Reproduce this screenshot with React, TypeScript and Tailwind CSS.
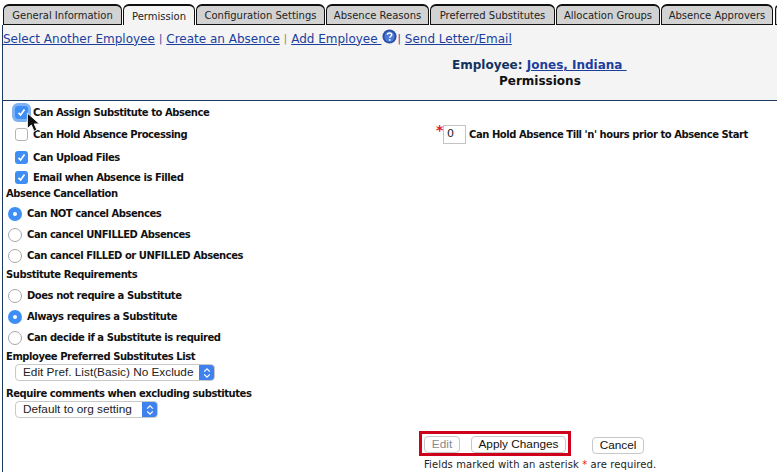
import React from 'react';

const tabs = [
  { label: 'General Information', w: 'w-[119px]' },
  { label: 'Permission', w: 'w-[72px]', active: true },
  { label: 'Configuration Settings', w: 'w-[129px]' },
  { label: 'Absence Reasons', w: 'w-[103px]' },
  { label: 'Preferred Substitutes', w: 'w-[125px]' },
  { label: 'Allocation Groups', w: 'w-[104px]' },
  { label: 'Absence Approvers', w: 'w-[112px]' },
];

const Check = ({ on, focus }: { on?: boolean; focus?: boolean }) => (
  <span
    className={`flex h-[13px] w-[13px] shrink-0 items-center justify-center rounded-[3px] ${
      on ? 'bg-[#3f8ef5]' : 'border border-[#b5b5b5] bg-white'
    } ${focus ? 'shadow-[0_0_0_3px_#7fb2f5]' : ''}`}
  >
    {on && (
      <svg width="9" height="9" viewBox="0 0 9 9" fill="none">
        <path d="M1.5 4.8 L3.6 7 L7.5 1.6" stroke="#fff" strokeWidth="1.7" />
      </svg>
    )}
  </span>
);

const Radio = ({ on }: { on?: boolean }) => (
  <span
    className={`flex h-[14px] w-[14px] shrink-0 items-center justify-center rounded-full ${
      on ? 'bg-[#3f8ef5]' : 'border border-[#a8a8a8] bg-white'
    }`}
  >
    {on && <span className="h-[4px] w-[4px] rounded-full bg-white" />}
  </span>
);

const Label = ({ children }: { children: React.ReactNode }) => (
  <span className="whitespace-nowrap text-[10px] font-bold tracking-[-0.45px] text-[#111]">{children}</span>
);

const CheckRow = ({ text, on, focus, h }: { text: string; on?: boolean; focus?: boolean; h: string }) => (
  <div className={`flex items-center gap-[5px] pl-[12px] ${h}`}>
    <Check on={on} focus={focus} />
    <Label>{text}</Label>
  </div>
);

const RadioRow = ({ text, on }: { text: string; on?: boolean }) => (
  <div className="flex h-[21px] items-center gap-[5px] pl-[5px]">
    <Radio on={on} />
    <Label>{text}</Label>
  </div>
);

const SelectBox = ({ text, w }: { text: string; w: string }) => (
  <div className={`ml-[12px] flex h-[17px] items-stretch overflow-hidden rounded-[4px] border border-[#c9c9c9] bg-white ${w}`}>
    <span
      className="flex-1 whitespace-nowrap pl-[7px] text-[11.8px] leading-[15px] text-[#222]"
      style={{ fontFamily: '"Liberation Sans", sans-serif' }}
    >
      {text}
    </span>
    <span className="flex w-[15px] items-center justify-center bg-[#3f82ee]">
      <svg width="8" height="12" viewBox="0 0 8 12" fill="none" stroke="#fff" strokeWidth="1.3">
        <path d="M1.2 4.6 L4 1.8 L6.8 4.6" />
        <path d="M1.2 7.4 L4 10.2 L6.8 7.4" />
      </svg>
    </span>
  </div>
);

const Btn = ({ children, w, muted }: { children: React.ReactNode; w: string; muted?: boolean }) => (
  <span
    className={`flex h-[17px] items-center justify-center rounded-[4px] border border-[#c8c8c8] bg-white text-[11.8px] ${w} ${
      muted ? 'text-[#8a8a8a]' : 'text-[#111]'
    }`}
    style={{ fontFamily: '"Liberation Sans", sans-serif' }}
  >
    {children}
  </span>
);

const Link = ({ children }: { children: React.ReactNode }) => (
  <a className="cursor-pointer whitespace-nowrap text-[12px] text-[#1c3f9e] underline">{children}</a>
);

const Sep = ({ color }: { color: string }) => <span className={`mx-[4px] text-[10px] ${color}`}>|</span>;

export default function App() {
  return (
    <div
      className="relative h-[472px] w-[777px] overflow-hidden bg-white"
      style={{ fontFamily: '"DejaVu Sans", Verdana, sans-serif' }}
    >
      {/* Tabs */}
      <div className="flex h-[25px] items-end gap-px pl-[3px]">
        {tabs.map((t) => (
          <div
            key={t.label}
            className={`flex h-[21px] shrink-0 items-center justify-center rounded-t-[6px] border-x border-t-2 border-[#111] pt-px text-[10px] text-[#222] ${t.w} ${
              t.active ? 'bg-[#f4f4f4]' : 'border-b bg-[#d2d2d2]'
            }`}
          >
            <span className="whitespace-nowrap">{t.label}</span>
          </div>
        ))}
        {/* next tab, cut off by the window edge */}
        <div className="ml-px h-[20px] w-[4px] shrink-0 rounded-tl-[6px] border-t-2 border-b border-l border-[#111] bg-[#d2d2d2]" />
      </div>

      <div className="ml-[2px] border-l border-[#1d3a63]">
        {/* Links and heading */}
        <div className="flex h-[76px] flex-col border-b border-[#1d3a63] bg-[#f4f4f4]">
          <div className="flex h-[27px] items-center">
            <Link>Select Another Employee</Link>
            <Sep color="text-[#1c3f9e]" />
            <Link>Create an Absence</Link>
            <Sep color="text-[#b07a20]" />
            <Link>Add Employee&nbsp;</Link>
            <svg width="15" height="15" viewBox="0 0 16 16" className="-mt-[5px] ml-[1px] shrink-0">
              <circle cx="8" cy="8" r="7.5" fill="#2a4ea8" />
              <circle cx="8" cy="8" r="5.5" fill="#4d79d8" />
              <path d="M5.8 6.2 C5.8 3.6 10.4 3.6 10.4 6.2 C10.4 7.8 8.2 7.8 8.2 9.4" fill="none" stroke="#fff" strokeWidth="1.6" />
              <circle cx="8.2" cy="11.6" r="1" fill="#fff" />
            </svg>
            <span className="mr-[4px] text-[10px] text-[#1c3f9e]">|</span>
            <Link>Send Letter/Email</Link>
          </div>
          <div className="flex flex-col pt-[5px] pl-[449px] text-[12px] leading-[16px] font-bold">
            <div className="whitespace-nowrap text-[#12325e]">
              Employee: <a className="text-[#1c3f9e] underline">Jones, Indiana&nbsp;</a>
            </div>
            <div className="pl-[47px] text-[#111]">Permissions</div>
          </div>
        </div>

        {/* Form */}
        <div className="pt-[1px]">
          <CheckRow text="Can Assign Substitute to Absence" on focus h="h-[20px]" />
          <div className="flex h-[24px] items-center">
            <div className="flex w-[433px] items-center gap-[5px] pl-[12px]">
              <Check />
              <Label>Can Hold Absence Processing</Label>
            </div>
            <span className="-mt-[8px] w-[7px] text-[14px] font-bold text-[#e01818]">*</span>
            <span className="mr-[3px] flex h-[19px] w-[23px] items-center border border-[#c4c4c4] bg-white pl-[3px] text-[11px] text-[#222]">
              0
            </span>
            <Label>Can Hold Absence Till 'n' hours prior to Absence Start</Label>
          </div>
          <CheckRow text="Can Upload Files" on h="h-[22px]" />
          <CheckRow text="Email when Absence is Filled" on h="h-[18px]" />
          <div className="flex h-[14px] items-center pl-[3px]">
            <Label>Absence Cancellation</Label>
          </div>
          <div className="h-[3px]" />
          <RadioRow text="Can NOT cancel Absences" on />
          <RadioRow text="Can cancel UNFILLED Absences" />
          <RadioRow text="Can cancel FILLED or UNFILLED Absences" />
          <div className="flex h-[16px] items-center pl-[3px]">
            <Label>Substitute Requirements</Label>
          </div>
          <div className="h-[3px]" />
          <RadioRow text="Does not require a Substitute" />
          <RadioRow text="Always requires a Substitute" on />
          <RadioRow text="Can decide if a Substitute is required" />
          <div className="flex h-[16px] items-center pl-[3px]">
            <Label>Employee Preferred Substitutes List</Label>
          </div>
          <SelectBox text="Edit Pref. List(Basic) No Exclude" w="w-[200px]" />
          <div className="mt-[5px] flex h-[15px] items-center pl-[3px]">
            <Label>Require comments when excluding substitutes</Label>
          </div>
          <SelectBox text="Default to org setting" w="w-[143px]" />

          {/* Actions */}
          <div className="mt-[13px] ml-[416px] flex items-center">
            <div className="flex h-[25px] w-[152px] items-center gap-[11px] border-[3px] border-[#d0021b] pt-[2px] pl-[2px]">
              <Btn w="w-[36px]" muted>Edit</Btn>
              <Btn w="w-[95px]">Apply Changes</Btn>
            </div>
            <div className="mt-[4px] ml-[21px]">
              <Btn w="w-[52px]">Cancel</Btn>
            </div>
          </div>
          <div className="mt-px ml-[421px] whitespace-nowrap text-[10px] leading-[16px] tracking-[0.1px] text-[#222]">
            Fields marked with an asterisk <span className="text-[#e01818]">*</span> are required.
          </div>
        </div>
      </div>

      {/* Cursor over the focused checkbox */}
      <svg width="16" height="22" viewBox="0 0 14 20" className="absolute left-[26px] top-[112px]">
        <path d="M1 1 L1 15 L4.6 11.8 L7 17.5 L9.6 16.4 L7.2 10.8 L12 10.8 Z" fill="#111" stroke="#fff" strokeWidth="0.8" />
      </svg>
    </div>
  );
}
